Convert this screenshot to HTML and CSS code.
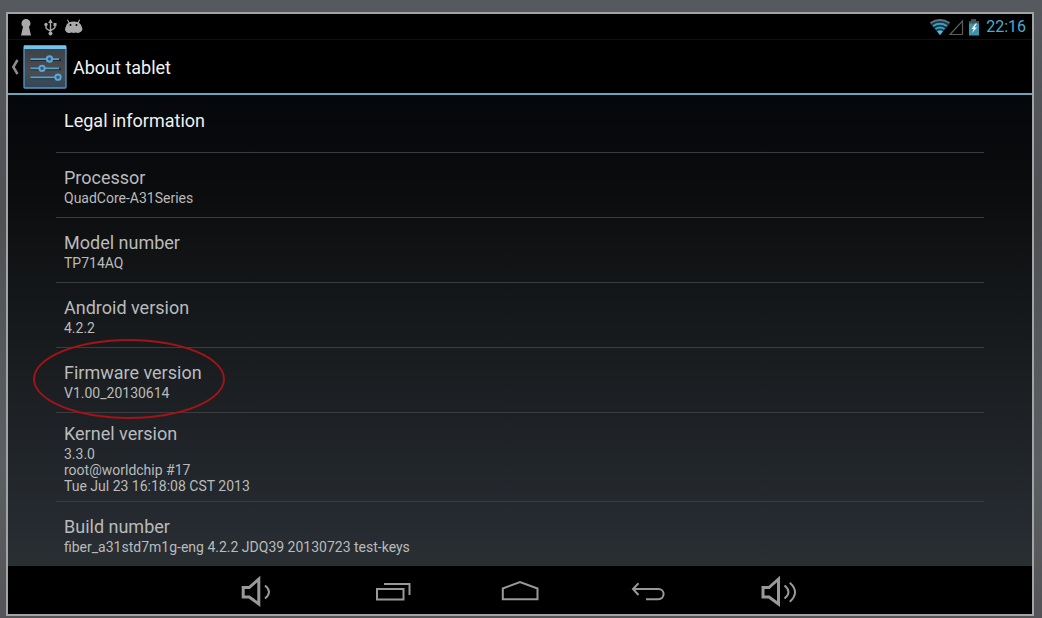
FILE: index.html
```html
<!DOCTYPE html>
<html lang="en">
<head>
<meta charset="utf-8">
<title>About tablet</title>
<link rel="stylesheet" href="styles.css">
</head>
<body>
<div class="device">
  <div class="status-bar">
    <div class="status-group">
      <svg class="status-icon" viewBox="0 0 24 24" aria-hidden="true"><path fill="#aaa" d="M12 4a4.500 4.500 0 0 1 4.500 4.500c0 1.500-.8 2.500-1.500 3.200l2 8.800H7L9 11.700C8.200 11 7.500 10 7.500 8.500A4.500 4.500 0 0 1 12 4z"/></svg>
      <svg class="status-icon" viewBox="0 0 24 24" aria-hidden="true"><g fill="none" stroke="#aaa" stroke-width="1.400"><path d="M12.500 7v11M8 10v2.500q0 1.500 4.500 3.500M17 10v2q0 1.500-4.500 3.500"/></g><path fill="#aaa" d="M12.500 4l2.300 4h-4.600zM15.500 8h3v3h-3z"/><circle cx="8" cy="9.500" r="1.700" fill="#aaa"/><circle cx="12.500" cy="18.500" r="2" fill="#aaa"/></svg>
      <svg class="status-icon" viewBox="0 0 24 24" aria-hidden="true"><path fill="#aaa" d="M5 5l.9-.5 1.500 2.700C8.600 6.700 10 6.500 11.500 6.500c1.600 0 3 .2 4.300.6L17.200 4.500l.9.500-1.400 2.700c1.800 1 2.700 2.600 3 4.100 1.300 1.900.8 4.400-1.200 5.300-1.700 1-3.500 1-4.700.5-1.500.4-2.800.4-4.200 0-2 .7-4.200.4-5.500-.9-1.500-1.500-1.300-3.700-.2-5 .3-1.700 1.200-3.200 2.600-4z"/><circle cx="8.500" cy="10" r="1" fill="#000"/><circle cx="14.500" cy="10" r="1" fill="#000"/></svg>
    </div>
    <div class="status-group status-right">
      <svg class="signal-icons" viewBox="0 0 54 24" role="img" aria-label="Wi-Fi connected, no mobile signal, battery charging">
        <path d="M2 8.500Q12 1 22 8.500L12 20.500z" fill="#123743"/>
        <g fill="none" stroke-width="2"><path stroke="#64727a" d="M2.500 8Q12 2 21.500 8"/><path stroke="#3c9fc4" d="M5 11Q12 6.500 19 11M7.500 14Q12 11 16.500 14"/></g>
        <path d="M9 16.300Q12 14.300 15 16.300L12 20z" fill="#55b9dc"/>
        <path d="M34.500 6v13.500H22z" fill="none" stroke="#5d5d5f" stroke-width="1.200"/>
        <path d="M43 4.500h5v2h3v14H41v-14h2z" fill="#3f91ac"/><path d="M43 4.500h5v2h3v2H41v-2h2z" fill="#43545b"/>
        <path d="M47.500 8.500l-4 5.500h2.200L44 18l5-5.500h-2.500L49 8.500z" fill="#e9fbff"/>
      </svg>
      <time class="clock">22:16</time>
    </div>
  </div>
  <header class="action-bar">
    <button class="up-button" type="button" aria-label="Navigate up">
      <svg class="chevron" viewBox="0 0 12 20" aria-hidden="true"><path d="M8.500 3L4.300 10l4.200 7" fill="none" stroke="#8d8d8d" stroke-width="2.500"/></svg>
      <svg class="settings-icon" viewBox="0 0 44 44" aria-hidden="true">
        <defs><linearGradient id="tile" x2="0" y2="1"><stop offset="0" stop-color="#3b4146"/><stop offset=".6" stop-color="#4a4d50"/><stop offset="1" stop-color="#30475b"/></linearGradient></defs>
        <rect x="1" y="1" width="42" height="42" rx="1" fill="url(#tile)" stroke="#5796c0" stroke-width="1.300"/>
        <path d="M1 .500h42v3.500H1z" fill="#73c1ed"/>
        <path d="M7.500 15H38M7.500 24.200H38M7.500 33.200H38" stroke="#202b33" stroke-width="2"/>
        <path d="M7.500 14.200H36M7.500 23.400H36M7.500 32.400H35" stroke="#579fd0" stroke-width="1.700"/>
        <g fill="#285f85" stroke="#62a5d2" stroke-width="1.900"><circle cx="26.500" cy="14" r="2.700"/><circle cx="19" cy="23.300" r="2.700"/><circle cx="35" cy="32.200" r="2.700"/></g>
      </svg>
    </button>
    <h1 class="screen-title">About tablet</h1>
  </header>
  <main class="content">
    <ul class="settings">
      <li class="row row-link"><button class="row-button" type="button">Legal information</button></li>
      <li class="row"><h2 class="row-title">Processor</h2><p class="row-summary">QuadCore-A31Series</p></li>
      <li class="row"><h2 class="row-title">Model number</h2><p class="row-summary">TP714AQ</p></li>
      <li class="row"><h2 class="row-title">Android version</h2><p class="row-summary">4.2.2</p></li>
      <li class="row row-marked"><h2 class="row-title">Firmware version</h2><p class="row-summary">V1.00_20130614</p></li>
      <li class="row"><h2 class="row-title">Kernel version</h2><p class="row-summary">3.3.0<br>root@worldchip #17<br>Tue Jul 23 16:18:08 CST 2013</p></li>
      <li class="row"><h2 class="row-title">Build number</h2><p class="row-summary">fiber_a31std7m1g-eng 4.2.2 JDQ39 20130723 test-keys</p></li>
    </ul>
  </main>
  <nav class="nav-bar" aria-label="System navigation">
    <button class="nav-button" type="button" aria-label="Volume down"><svg class="nav-icon" viewBox="0 0 48 48"><path class="bold" d="M7.200 21.500h6L22.800 13v25L13.200 31h-6z"/><path d="M29 19.500q8 6.500 0 13"/></svg></button>
    <button class="nav-button" type="button" aria-label="Recent apps"><svg class="nav-icon" viewBox="0 0 48 48"><path d="M11 23h26.500v10.500H11zM18 18h25.500v11"/></svg></button>
    <button class="nav-button" type="button" aria-label="Home"><svg class="nav-icon" viewBox="0 0 48 48"><path d="M6.800 33.200V22.500L24 16l17.500 6.500v10.700z"/></svg></button>
    <button class="nav-button" type="button" aria-label="Back"><svg class="nav-icon" viewBox="0 0 48 48"><path d="M7 23H32.500a5 5 0 0 1 0 10.200H20M12.500 17.300L7 23l5.500 6"/></svg></button>
    <button class="nav-button" type="button" aria-label="Volume up"><svg class="nav-icon" viewBox="0 0 48 48"><path class="bold" d="M7 21.500h6L22.500 13v25L13 31H7z"/><path d="M28.500 19.500q8 6.500 0 13M33.800 16.700q10.500 9.500 0 19"/></svg></button>
  </nav>
</div>
</body>
</html>
```
FILE: styles.css
```css
*, *::before, *::after { box-sizing: border-box; }

body {
  margin: 0;
  min-height: 100vh;
  padding: 12px 8px 2px 6px;
  display: flex;
  background: linear-gradient(#56595d, #4e5054 35%, #5b5f62 75%, #545458);
  font-family: Roboto, "Noto Sans", sans-serif;
  color: #b9bbbc;
}

.device {
  flex: 1;
  display: flex;
  flex-direction: column;
  border: 2px solid #a2a4a4;
  background: #000;
}

.status-bar {
  height: 26px;
  padding: 0 6px;
  display: flex;
  justify-content: space-between;
  align-items: center;
  border-bottom: 1px solid #111;
}

.status-group { display: flex; align-items: center; }
.status-icon { width: 24px; height: 24px; }
.signal-icons { width: 54px; height: 24px; }
.status-right { gap: 4px; }
.clock { font-size: 16px; line-height: 24px; color: #4aabd0; }

.action-bar {
  height: 55px;
  display: flex;
  align-items: center;
  gap: 6px;
  padding-left: 1px;
  border-bottom: 2px solid #6ba3ba;
}

.up-button {
  display: flex;
  align-items: center;
  gap: 2px;
  padding: 0;
  border: 0;
  background: none;
}

.chevron { width: 12px; height: 20px; }
.settings-icon { width: 44px; height: 44px; }
.screen-title { margin: 0; padding-top: 2px; font-size: 18px; line-height: 24px; font-weight: 400; color: #f2f2f2; }

.content {
  flex: 1;
  padding: 0 48px;
  background: linear-gradient(#05070a, #0b0c0e 20%, #15181a 45%, #1e2226 70%, #262b31 92%, #292f31);
}

.settings { margin: 0; padding: 0; list-style: none; }

.row {
  min-height: 65px;
  padding: 8px 8px 7px;
  display: flex;
  flex-direction: column;
  justify-content: center;
  border-bottom: 1px solid #3a3d3f;
}

.row:last-child { min-height: 64px; border-bottom: 0; }
.row-link { min-height: 58px; padding: 0; justify-content: flex-start; }

.row-button {
  padding: 14px 8px 18px;
  border: 0;
  background: none;
  text-align: left;
  font: 18px/24px Roboto, "Noto Sans", sans-serif;
  color: #f0f0f0;
}

.row-title { margin: 0; font-size: 18px; line-height: 25px; font-weight: 400; }
.row-summary { margin: 0; font-size: 14px; line-height: 16px; }

.row-marked { position: relative; }
.row-marked::after {
  content: "";
  position: absolute;
  left: -23px;
  top: -9px;
  width: 192px;
  height: 80px;
  border: 2px solid #a31318;
  border-radius: 50%;
  pointer-events: none;
}

.nav-bar { height: 48px; display: flex; justify-content: center; background: #000; }
.nav-button {
  width: 130px;
  padding: 0;
  display: flex;
  justify-content: center;
  border: 0;
  background: none;
}
.nav-icon { width: 48px; height: 48px; fill: none; stroke: #999; stroke-width: 2; }
.nav-icon .bold { stroke-width: 3; }
```
